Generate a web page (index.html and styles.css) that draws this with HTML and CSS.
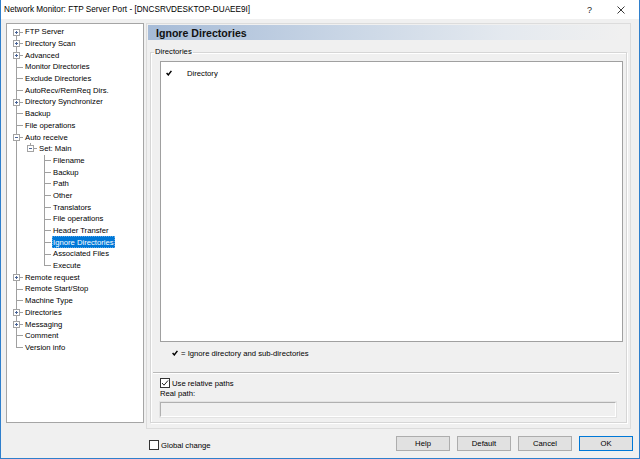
FILE: index.html
```html
<!DOCTYPE html>
<html>
<head>
<meta charset="utf-8">
<link rel="stylesheet" href="styles.css">
</head>
<body>
<div class="window">
  <div class="titlebar">
    <span class="title">Network Monitor: FTP Server Port - [DNCSRVDESKTOP-DUAEE9I]</span>
    <span class="tb-help">?</span>
    <span class="tb-close"><svg width="8" height="8" viewBox="0 0 8 8"><path d="M0.5 0.5L7.5 7.5M7.5 0.5L0.5 7.5" stroke="#222" stroke-width="0.9" fill="none"/></svg></span>
  </div>
  <div class="client">
    <div class="main">
      <div class="tree">
        <div class="row"><i class="c f p"></i><span class="tx">FTP Server</span></div>
        <div class="row"><i class="c t p"></i><span class="tx">Directory Scan</span></div>
        <div class="row"><i class="c t p"></i><span class="tx">Advanced</span></div>
        <div class="row"><i class="c t"></i><span class="tx">Monitor Directories</span></div>
        <div class="row"><i class="c t"></i><span class="tx">Exclude Directories</span></div>
        <div class="row"><i class="c t"></i><span class="tx">AutoRecv/RemReq Dirs.</span></div>
        <div class="row"><i class="c t p"></i><span class="tx">Directory Synchronizer</span></div>
        <div class="row"><i class="c t"></i><span class="tx">Backup</span></div>
        <div class="row"><i class="c t"></i><span class="tx">File operations</span></div>
        <div class="row"><i class="c t m"></i><span class="tx">Auto receive</span></div>
        <div class="row"><i class="c v"></i><i class="c l m"></i><span class="tx">Set: Main</span></div>
        <div class="row"><i class="c v"></i><i class="c"></i><i class="c t"></i><span class="tx">Filename</span></div>
        <div class="row"><i class="c v"></i><i class="c"></i><i class="c t"></i><span class="tx">Backup</span></div>
        <div class="row"><i class="c v"></i><i class="c"></i><i class="c t"></i><span class="tx">Path</span></div>
        <div class="row"><i class="c v"></i><i class="c"></i><i class="c t"></i><span class="tx">Other</span></div>
        <div class="row"><i class="c v"></i><i class="c"></i><i class="c t"></i><span class="tx">Translators</span></div>
        <div class="row"><i class="c v"></i><i class="c"></i><i class="c t"></i><span class="tx">File operations</span></div>
        <div class="row"><i class="c v"></i><i class="c"></i><i class="c t"></i><span class="tx">Header Transfer</span></div>
        <div class="row"><i class="c v"></i><i class="c"></i><i class="c t"></i><span class="tx sel">Ignore Directories</span></div>
        <div class="row"><i class="c v"></i><i class="c"></i><i class="c t"></i><span class="tx">Associated Files</span></div>
        <div class="row"><i class="c v"></i><i class="c"></i><i class="c l"></i><span class="tx">Execute</span></div>
        <div class="row"><i class="c t p"></i><span class="tx">Remote request</span></div>
        <div class="row"><i class="c t"></i><span class="tx">Remote Start/Stop</span></div>
        <div class="row"><i class="c t"></i><span class="tx">Machine Type</span></div>
        <div class="row"><i class="c t p"></i><span class="tx">Directories</span></div>
        <div class="row"><i class="c t p"></i><span class="tx">Messaging</span></div>
        <div class="row"><i class="c t"></i><span class="tx">Comment</span></div>
        <div class="row"><i class="c l"></i><span class="tx">Version info</span></div>
      </div>
      <div class="page">
        <div class="banner">Ignore Directories</div>
        <fieldset class="group">
          <legend class="group-label">Directories</legend>
          <div class="list">
            <div class="item"><svg class="tick" width="6" height="6" viewBox="0 0 6 6"><path d="M0.6 3.1L2.3 4.9L5.4 0.9" stroke="#000" stroke-width="1.5" fill="none"/></svg><span class="item-text">Directory</span></div>
          </div>
          <div class="note"><svg class="tick" width="6" height="6" viewBox="0 0 6 6"><path d="M0.6 3.1L2.3 4.9L5.4 0.9" stroke="#000" stroke-width="1.5" fill="none"/></svg><span class="note-text">= Ignore directory and sub-directories</span></div>
          <div class="sep"></div>
          <div class="check-row">
            <span class="cb"><svg width="8" height="8" viewBox="0 0 8 8"><path d="M1 4L3 6.2L7 1.5" stroke="#222" stroke-width="1" fill="none"/></svg></span>
            <span class="cb-text">Use relative paths</span>
          </div>
          <div class="caption">Real path:</div>
          <div class="input"></div>
        </fieldset>
      </div>
    </div>
    <div class="footer">
      <div class="check-row global">
        <span class="cb"></span>
        <span class="cb-text">Global change</span>
      </div>
      <div class="buttons">
        <div class="btn">Help</div>
        <div class="btn">Default</div>
        <div class="btn">Cancel</div>
        <div class="btn default">OK</div>
      </div>
    </div>
  </div>
</div>
</body>
</html>
```

FILE: styles.css
```css
*, *::before, *::after { box-sizing: border-box; }
html, body { margin: 0; padding: 0; }
body {
  width: 640px;
  height: 459px;
  overflow: hidden;
  font-family: "Liberation Sans", Arial, sans-serif;
  font-size: 7.7px;
  color: #000;
  background: #f0f0f0;
}
.window {
  width: 640px;
  height: 459px;
  border-left: 1px solid #2f7fcc;
  border-right: 1px solid #2f7fcc;
  border-bottom: 1px solid #2f7fcc;
  display: flex;
  flex-direction: column;
  background: #f0f0f0;
}
.titlebar {
  height: 19px;
  flex: none;
  background: #fff;
  display: flex;
  align-items: center;
  padding-left: 3px;
}
.title {
  font-size: 8.2px;
  color: #000;
  flex: 1;
  white-space: nowrap;
}
.tb-help {
  font-size: 9px;
  color: #222;
  margin-right: 25px;
}
.tb-close {
  display: flex;
  margin-right: 14px;
}
.client {
  flex: 1;
  display: flex;
  flex-direction: column;
}
.main {
  display: flex;
  padding-top: 4px;
  padding-left: 5px;
}
.tree {
  width: 138px;
  height: 400px;
  background: #fff;
  border: 1px solid #a5a5a5;
  padding-top: 2px;
  padding-left: 2px;
  flex: none;
}
.row {
  height: 11.7px;
  display: flex;
  align-items: stretch;
  white-space: nowrap;
}
.c {
  width: 14px;
  flex: none;
  position: relative;
  display: block;
}
.c.v {
  background: linear-gradient(#a0a0a0, #a0a0a0) 7px 0 / 1px 100% no-repeat;
}
.c.t {
  background:
    linear-gradient(#a0a0a0, #a0a0a0) 7px 0 / 1px 100% no-repeat,
    linear-gradient(#a0a0a0, #a0a0a0) 7px 5.5px / 7px 1px no-repeat;
}
.c.l {
  background:
    linear-gradient(#a0a0a0, #a0a0a0) 7px 0 / 1px 6px no-repeat,
    linear-gradient(#a0a0a0, #a0a0a0) 7px 5.5px / 7px 1px no-repeat;
}
.c.f {
  background:
    linear-gradient(#a0a0a0, #a0a0a0) 7px 6px / 1px 100% no-repeat,
    linear-gradient(#a0a0a0, #a0a0a0) 7px 5.5px / 7px 1px no-repeat;
}
.c.p::before, .c.m::before {
  content: "";
  position: absolute;
  left: 4px;
  top: 2.5px;
  width: 7px;
  height: 7px;
  border: 1px solid #a3a3a3;
  background:
    linear-gradient(#4a6496, #4a6496) center / 3px 1px no-repeat,
    #fff;
}
.c.p::before {
  background:
    linear-gradient(#4a6496, #4a6496) center / 3px 1px no-repeat,
    linear-gradient(#4a6496, #4a6496) center / 1px 3px no-repeat,
    #fff;
}
.tx {
  display: flex;
  align-items: center;
  margin-left: 1px;
  padding: 0 1px;
}
.tx.sel {
  background: #0078d7;
  color: #fff;
  outline: 1px dotted #5aa8e8;
  outline-offset: -1px;
}
.page {
  width: 485px;
  height: 406px;
  margin-left: 2px;
  border: 1px solid #dcdcdc;
  padding: 1px;
  flex: none;
  display: flex;
  flex-direction: column;
}
.banner {
  width: 474px;
  height: 15px;
  flex: none;
  background: linear-gradient(to right, #a6bbd7 0%, #c8d5e5 40%, #e4e9ef 75%, #f0f0f0 100%);
  font-weight: bold;
  font-size: 10.6px;
  color: #111;
  display: flex;
  align-items: center;
  padding-left: 8px;
}
.group {
  margin: 7px 0 0 2px;
  padding: 4px 0 0 0;
  width: 477px;
  height: 376px;
  border: 1px solid #d6d6d6;
  box-shadow: inset 1px 1px 0 #fff, 1px 1px 0 #fff;
  min-width: 0;
}
.group-label {
  padding: 0 1px;
  margin-left: 3px;
  line-height: 10px;
}
.list {
  margin-left: 9px;
  width: 463px;
  height: 281px;
  background: #fff;
  border: 1px solid #a0a0a0;
  padding-top: 6px;
  padding-left: 5px;
}
.item {
  display: flex;
  align-items: center;
  height: 10px;
}
.tick { display: block; flex: none; }
.item-text { margin-left: 15px; }
.note {
  display: flex;
  align-items: center;
  height: 10px;
  margin-top: 6px;
  margin-left: 21px;
}
.note-text { margin-left: 3px; }
.sep {
  margin: 14px 0 0 2px;
  width: 466px;
  border-top: 1px solid #b9b9b9;
  border-bottom: 1px solid #fff;
}
.check-row {
  display: flex;
  align-items: center;
  height: 10px;
  margin-top: 4px;
  margin-left: 9px;
}
.cb {
  width: 10px;
  height: 10px;
  border: 1px solid #333;
  background: #fff;
  display: flex;
  align-items: center;
  justify-content: center;
  flex: none;
}
.cb svg { display: block; }
.cb-text { margin-left: 2px; }
.caption {
  height: 10px;
  line-height: 10px;
  margin-top: 1px;
  margin-left: 9px;
}
.input {
  margin-top: 3px;
  margin-left: 9px;
  width: 456px;
  height: 15px;
  background: #f0f0f0;
  border-top: 1px solid #b0b0b0;
  border-left: 1px solid #b0b0b0;
  border-bottom: 1px solid #fff;
  border-right: 1px solid #fff;
  box-shadow: 0 0 0 1px #e3e3e3;
}
.footer {
  flex: 1;
  display: flex;
  align-items: center;
  padding-left: 148px;
  padding-right: 6px;
}
.global {
  margin: 3px 0 0 0;
}
.buttons {
  margin-left: auto;
  display: flex;
  gap: 7px;
}
.btn {
  width: 54px;
  height: 15px;
  background: #e1e1e1;
  border: 1px solid #adadad;
  display: flex;
  align-items: center;
  justify-content: center;
}
.btn.default {
  border-color: #0078d7;
}
```
